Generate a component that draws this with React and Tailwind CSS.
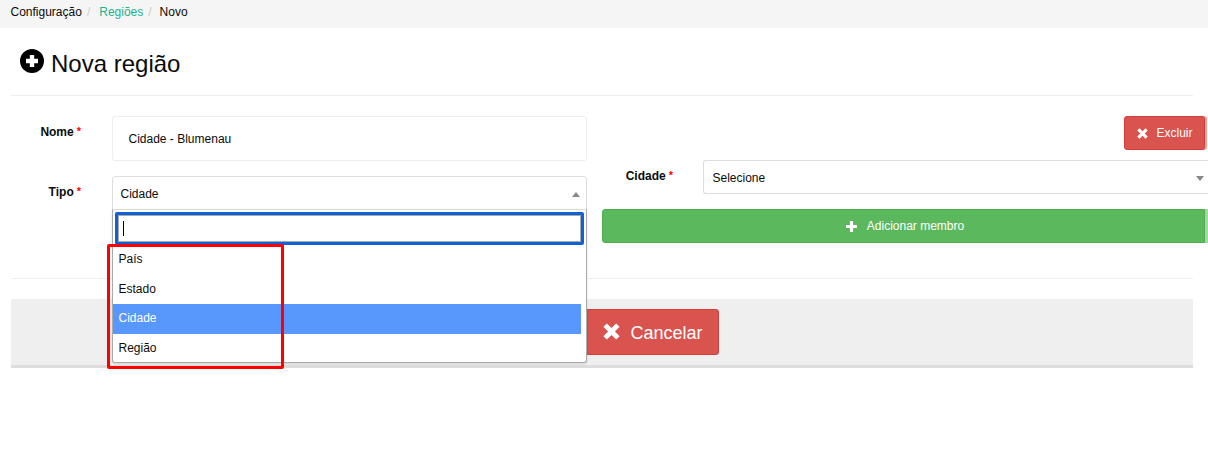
import React from 'react';

// Glyphicon-style heavy cross
function RemoveIcon({ className }) {
  return (
    <svg viewBox="0 0 16 16" className={className} fill="currentColor">
      <path d="M3.6 0.4 L8 4.8 L12.4 0.4 L15.6 3.6 L11.2 8 L15.6 12.4 L12.4 15.6 L8 11.2 L3.6 15.6 L0.4 12.4 L4.8 8 L0.4 3.6 Z" />
    </svg>
  );
}

function PlusIcon({ className }) {
  return (
    <svg viewBox="0 0 12 12" className={className} fill="currentColor">
      <path d="M4.3 0 H7.7 V4.3 H12 V7.7 H7.7 V12 H4.3 V7.7 H0 V4.3 H4.3 Z" />
    </svg>
  );
}

function Required() {
  return <span className="text-[#ff0000] font-bold text-[11px] ml-[3px] relative -top-[1px]">*</span>;
}

const OPTIONS = ['País', 'Estado', 'Cidade', 'Região'];

export default function App() {
  return (
    <div className="w-[1208px] h-[454px] overflow-hidden bg-white text-[12px] leading-[17px] text-[#0b0b0b] font-['Liberation_Sans',Arial,sans-serif]">
      {/* breadcrumb */}
      <div className="h-[28px] bg-[#f5f5f5] pl-[10.5px] flex items-center gap-[5px] pb-[3px]">
        <span>Configuração</span>
        <span className="text-[#cccccc]">/</span>
        <span className="text-[#1ab394] ml-[4px]">Regiões</span>
        <span className="text-[#cccccc]">/</span>
        <span className="ml-[3px]">Novo</span>
      </div>

      <div className="w-[1182px] ml-[11px]">
        {/* title */}
        <div className="h-[68px] border-b border-[#eeeeee] flex items-center pl-[9px] gap-[7px] pt-[4px]">
          <svg viewBox="0 0 24 24" className="w-[24px] h-[24px] -mt-[5px] text-black">
            <circle cx="12" cy="12" r="12" fill="currentColor" />
            <path d="M9.8 6 H14.2 V9.8 H18 V14.2 H14.2 V18 H9.8 V14.2 H6 V9.8 H9.8 Z" fill="#ffffff" />
          </svg>
          <h1 className="text-[24px] leading-[28px]">Nova região</h1>
        </div>

        {/* form */}
        <div className="h-[183px] border-b border-[#eeeeee] flex pt-[20px]">
          <div className="w-[576px] shrink-0">
            <div className="flex">
              <label className="w-[70px] pt-[8px] text-right font-bold whitespace-nowrap">Nome<Required /></label>
              <div className="ml-[31px] w-[475px] h-[45px] border border-[#eeeeee] rounded-[3px] flex items-center pl-[15.5px] pt-[2px]">
                Cidade - Blumenau
              </div>
            </div>
            <div className="flex mt-[15px]">
              <label className="w-[70px] pt-[8px] text-right font-bold whitespace-nowrap">Tipo<Required /></label>
              <div className="relative ml-[31px] w-[475px]">
                <div className="h-[34px] border border-[#dddddd] rounded-t-[3px] flex items-center justify-between pl-[7.5px] pr-[6px] pt-[2px]">
                  <span>Cidade</span>
                  <span className="w-0 h-0 border-x-[4px] border-x-transparent border-b-[5px] border-b-[#888888]" />
                </div>
                {/* open dropdown */}
                <div className="absolute z-10 left-0 top-[33px] w-[475px] h-[154px] bg-white border border-[#aaaaaa] border-t-[#dddddd] rounded-b-[3px] shadow-sm">
                  <div className="mx-[2px] mt-[2px] h-[33px] border-[3px] border-[#0f62d6] rounded-[2px] flex items-center pl-[5px] shadow-[inset_0_0_0_1px_#a9a9a9]">
                    <span className="w-px h-[15px] bg-black" />
                  </div>
                  <ul className="mr-[5px]">
                    {OPTIONS.map((o) => (
                      <li
                        key={o}
                        className={`h-[29.5px] flex items-center pl-[5.5px] ${o === 'Cidade' ? 'bg-[#5897fb] text-white' : ''}`}
                      >
                        {o}
                      </li>
                    ))}
                  </ul>
                </div>
              </div>
            </div>
          </div>

          <div className="ml-[15px] w-[606px] shrink-0">
            <div className="flex justify-end pr-[3px]">
              <button className="h-[34px] w-[81px] flex items-center justify-center gap-[8px] pl-[1px] bg-[#d9534f] border border-[#d43f3a] rounded-[3px] text-white shadow-[2px_0_0_#e8a5a2]">
                <RemoveIcon className="w-[11px] h-[11px]" />
                Excluir
              </button>
            </div>
            <div className="flex items-start mt-[10px]">
              <label className="w-[71px] pt-[8px] text-right font-bold whitespace-nowrap">Cidade<Required /></label>
              <div className="ml-[30px] w-[505px] h-[34px] border border-[#dddddd] border-r-0 rounded-l-[3px] flex items-center justify-between pl-[8.5px] pr-[4px] pt-[2px]">
                <span>Selecione</span>
                <span className="w-0 h-0 border-x-[4px] border-x-transparent border-t-[5px] border-t-[#888888]" />
              </div>
            </div>
            <button className="mt-[15px] h-[34px] w-[603px] flex items-center justify-center gap-[10px] pl-[3px] bg-[#5cb85c] border border-[#4cae4c] rounded-l-[3px] text-white shadow-[3px_0_0_#a6d6a6]">
              <PlusIcon className="w-[11px] h-[11px]" />
              Adicionar membro
            </button>
          </div>
        </div>

        {/* footer actions */}
        <div className="mt-[20px] h-[69px] bg-[#efefef] border-b-[3px] border-[#dddddd] pt-[10px] pl-[566px]">
          <button className="h-[46px] w-[142px] pl-[10px] pt-[2px] flex items-center justify-center gap-[10px] bg-[#d9534f] border border-[#d43f3a] rounded-[3px] text-white text-[18px]">
            <RemoveIcon className="w-[17px] h-[17px] -mt-[3px]" />
            Cancelar
          </button>
        </div>
      </div>

      {/* annotation drawn on the screenshot */}
      <div className="absolute z-20 left-[107px] top-[244px] w-[177px] h-[125px] border-[3px] border-[#ff0000] rounded-[2px] pointer-events-none" />
    </div>
  );
}
